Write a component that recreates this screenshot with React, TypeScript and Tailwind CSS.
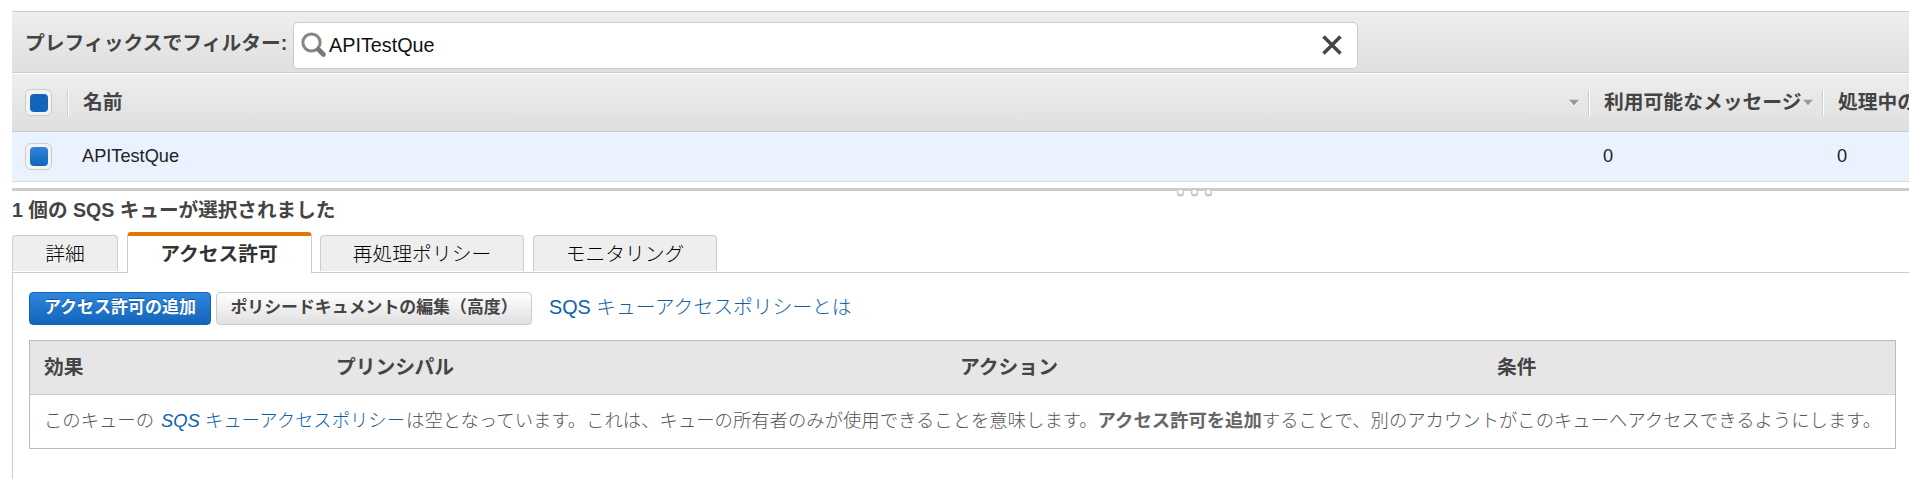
import React from 'react';

const FONT = "font-['Liberation_Sans','Noto_Sans_CJK_JP',sans-serif]";

function CheckBox({ flat = false }: { flat?: boolean }) {
  return (
    <span className="flex h-[27px] w-[27px] shrink-0 items-center justify-center rounded-[6px] border border-[#ccc] bg-[#f3f3f3]">
      <span
        className={
          flat
            ? 'h-[18px] w-[18px] rounded-[4px] bg-[#1166bb]'
            : 'h-[19px] w-[18px] rounded-[4px] bg-linear-to-b from-[#2f86dd] to-[#1166bb]'
        }
      />
    </span>
  );
}

function Caret() {
  return (
    <svg width="12" height="8" viewBox="0 0 12 8" className="shrink-0">
      <path d="M1.5 2.2 L10.5 2.2 L6 7.6 Z" fill="#fff" />
      <path d="M1 .8 L11 .8 L6 6.4 Z" fill="#999" />
    </svg>
  );
}

function Divider() {
  return <span className="h-[26px] w-[2px] shrink-0 border-r border-l border-r-white border-l-[#ccc]" />;
}

function Tab({ label, width }: { label: string; width: string }) {
  return (
    <div
      className={`flex h-[36px] shrink-0 items-center justify-center rounded-t-[4px] border border-b-0 border-[#ccc] bg-[#eee] text-black ${width}`}
    >
      {label}
    </div>
  );
}

export default function App() {
  return (
    <div className={`flex h-[479px] w-[1909px] flex-col overflow-hidden bg-white pt-[11px] pl-3 text-[19.8px] leading-6 font-light whitespace-nowrap text-[#444] ${FONT}`}>
      <div className="flex h-[62px] shrink-0 items-start border-y border-[#ccc] bg-linear-to-b from-[#eee] to-[#dfdfdf] pt-[10px] pl-[13px] font-bold">
        <span className="w-[268px] shrink-0 pt-[9px]">プレフィックスでフィルター:</span>
        <div className="flex h-[47px] w-[1065px] items-center rounded-[5px] border border-[#ccc] bg-white pb-[2px] pl-[7px] font-light text-[#111]">
          <svg width="26" height="26" viewBox="0 0 26 26" fill="none" className="shrink-0">
            <circle cx="10.5" cy="10.5" r="8.6" stroke="#858585" strokeWidth="3" />
            <path d="M17.5 17.5 L22.5 22.5" stroke="#777" strokeWidth="4.6" strokeLinecap="round" />
          </svg>
          <span className="pl-[2px]">APITestQue</span>
          <svg width="22" height="22" viewBox="0 0 22 22" fill="none" className="mr-[14px] ml-auto">
            <path d="M2.5 2.5 L19.5 19.5 M19.5 2.5 L2.5 19.5" stroke="#444" strokeWidth="3.4" />
          </svg>
        </div>
      </div>

      <div className="flex h-[59px] shrink-0 items-center border-t border-b border-t-white border-b-[#ccc] bg-linear-to-b from-[#eee] to-[#dfdfdf] pl-[13px] font-bold">
        <CheckBox flat />
        <span className="w-[15px] shrink-0" />
        <Divider />
        <span className="w-[1499px] shrink-0 pb-[2px] pl-[14px]">名前</span>
        <span className="w-[14px] shrink-0">
          <Caret />
        </span>
        <span className="w-[6px] shrink-0" />
        <Divider />
        <span className="w-[212px] shrink-0 pb-[2px] pl-[14px]">利用可能なメッセージ</span>
        <span className="w-[20px] shrink-0">
          <Caret />
        </span>
        <Divider />
        <span className="shrink-0 pb-[2px] pl-[14px]">処理中の</span>
      </div>

      <div className="flex h-[50px] shrink-0 items-center border-b border-[#d5dbe3] bg-[#eaf2ff] pl-[13px] text-[18.2px] text-[#222]">
        <CheckBox />
        <span className="w-[1522px] shrink-0 pb-px pl-[30px]">APITestQue</span>
        <span className="w-[234px] shrink-0 pb-px pl-[29px]">0</span>
        <span className="shrink-0 pb-px pl-[29px]">0</span>
      </div>

      <div className="relative mt-[6px] h-[3px] shrink-0 bg-[#ccc]">
        <svg className="absolute top-[1px] left-[1163px]" width="38" height="8" viewBox="0 0 38 8" fill="none">
          {[5.5, 19.5, 33.5].map((x) => (
            <g key={x}>
              <circle cx={x} cy="4" r="3.6" fill="#c6c6c6" />
              <circle cx={x} cy="3" r="2.3" fill="#fff" />
            </g>
          ))}
        </svg>
      </div>

      <div className="mt-[7px] h-[34px] shrink-0 text-[19.6px] font-bold">1 個の SQS キューが選択されました</div>

      <div className="flex h-[40px] shrink-0 items-end">
        <div className="flex h-full items-end pb-px">
          <Tab label="詳細" width="w-[106px]" />
        </div>
        <div className="relative z-10 ml-[9px] flex h-[41px] w-[185px] shrink-0 items-center justify-center self-start rounded-t-[4px] border-x border-t-4 border-x-[#ccc] border-t-[#e07700] bg-white pr-px pb-[2px] font-bold text-[#333]">
          アクセス許可
        </div>
        <div className="ml-[8px] flex h-full items-end pb-px">
          <Tab label="再処理ポリシー" width="w-[204px]" />
        </div>
        <div className="ml-[9px] flex h-full items-end pb-px">
          <Tab label="モニタリング" width="w-[184px]" />
        </div>
      </div>

      <div className="flex grow flex-col border-t border-l border-[#ccc] pt-[19px] pr-3 pl-[16px]">
        <div className="flex h-[33px] shrink-0 items-center text-[17px] font-bold">
          <button className="h-[33px] w-[182px] rounded-[4px] border border-[#1166bb] bg-linear-to-b from-[#2f86dd] to-[#1166bb] pb-px text-white text-shadow-[0_-1px_0_#0d569e]">
            アクセス許可の追加
          </button>
          <button className="ml-[5px] h-[33px] w-[316px] rounded-[4px] border border-[#ccc] bg-linear-to-b from-white to-[#e0e0e0] pb-px text-[16.9px] text-[#444]">
            ポリシードキュメントの編集（高度）
          </button>
          <a className="ml-[17px] pb-[4px] text-[19.8px] font-light text-[#0f62a8]">SQS キューアクセスポリシーとは</a>
        </div>

        <div className="mt-[15px] h-[109px] w-[1867px] shrink-0 border border-[#bbb]">
          <div className="flex h-[54px] items-center border-b border-[#ccc] bg-[#e6e6e6] pb-[2px] pl-[14px] font-bold">
            <span className="w-[292px]">効果</span>
            <span className="w-[624px]">プリンシパル</span>
            <span className="w-[537px]">アクション</span>
            <span>条件</span>
          </div>
          <div className="flex h-[53px] items-center pb-[2px] pl-[14px] text-[18.35px] text-[#555]">
            <span>このキューの</span>
            <a className="ml-[7px] text-[#0f62a8]">
              <i>SQS</i> キューアクセスポリシー
            </a>
            <span className="ml-px">
              は空となっています。これは、キューの所有者のみが使用できることを意味します。
              <b className="font-bold text-[#666]">アクセス許可を追加</b>
              することで、別のアカウントがこのキューへアクセスできるようにします。
            </span>
          </div>
        </div>
      </div>
    </div>
  );
}
